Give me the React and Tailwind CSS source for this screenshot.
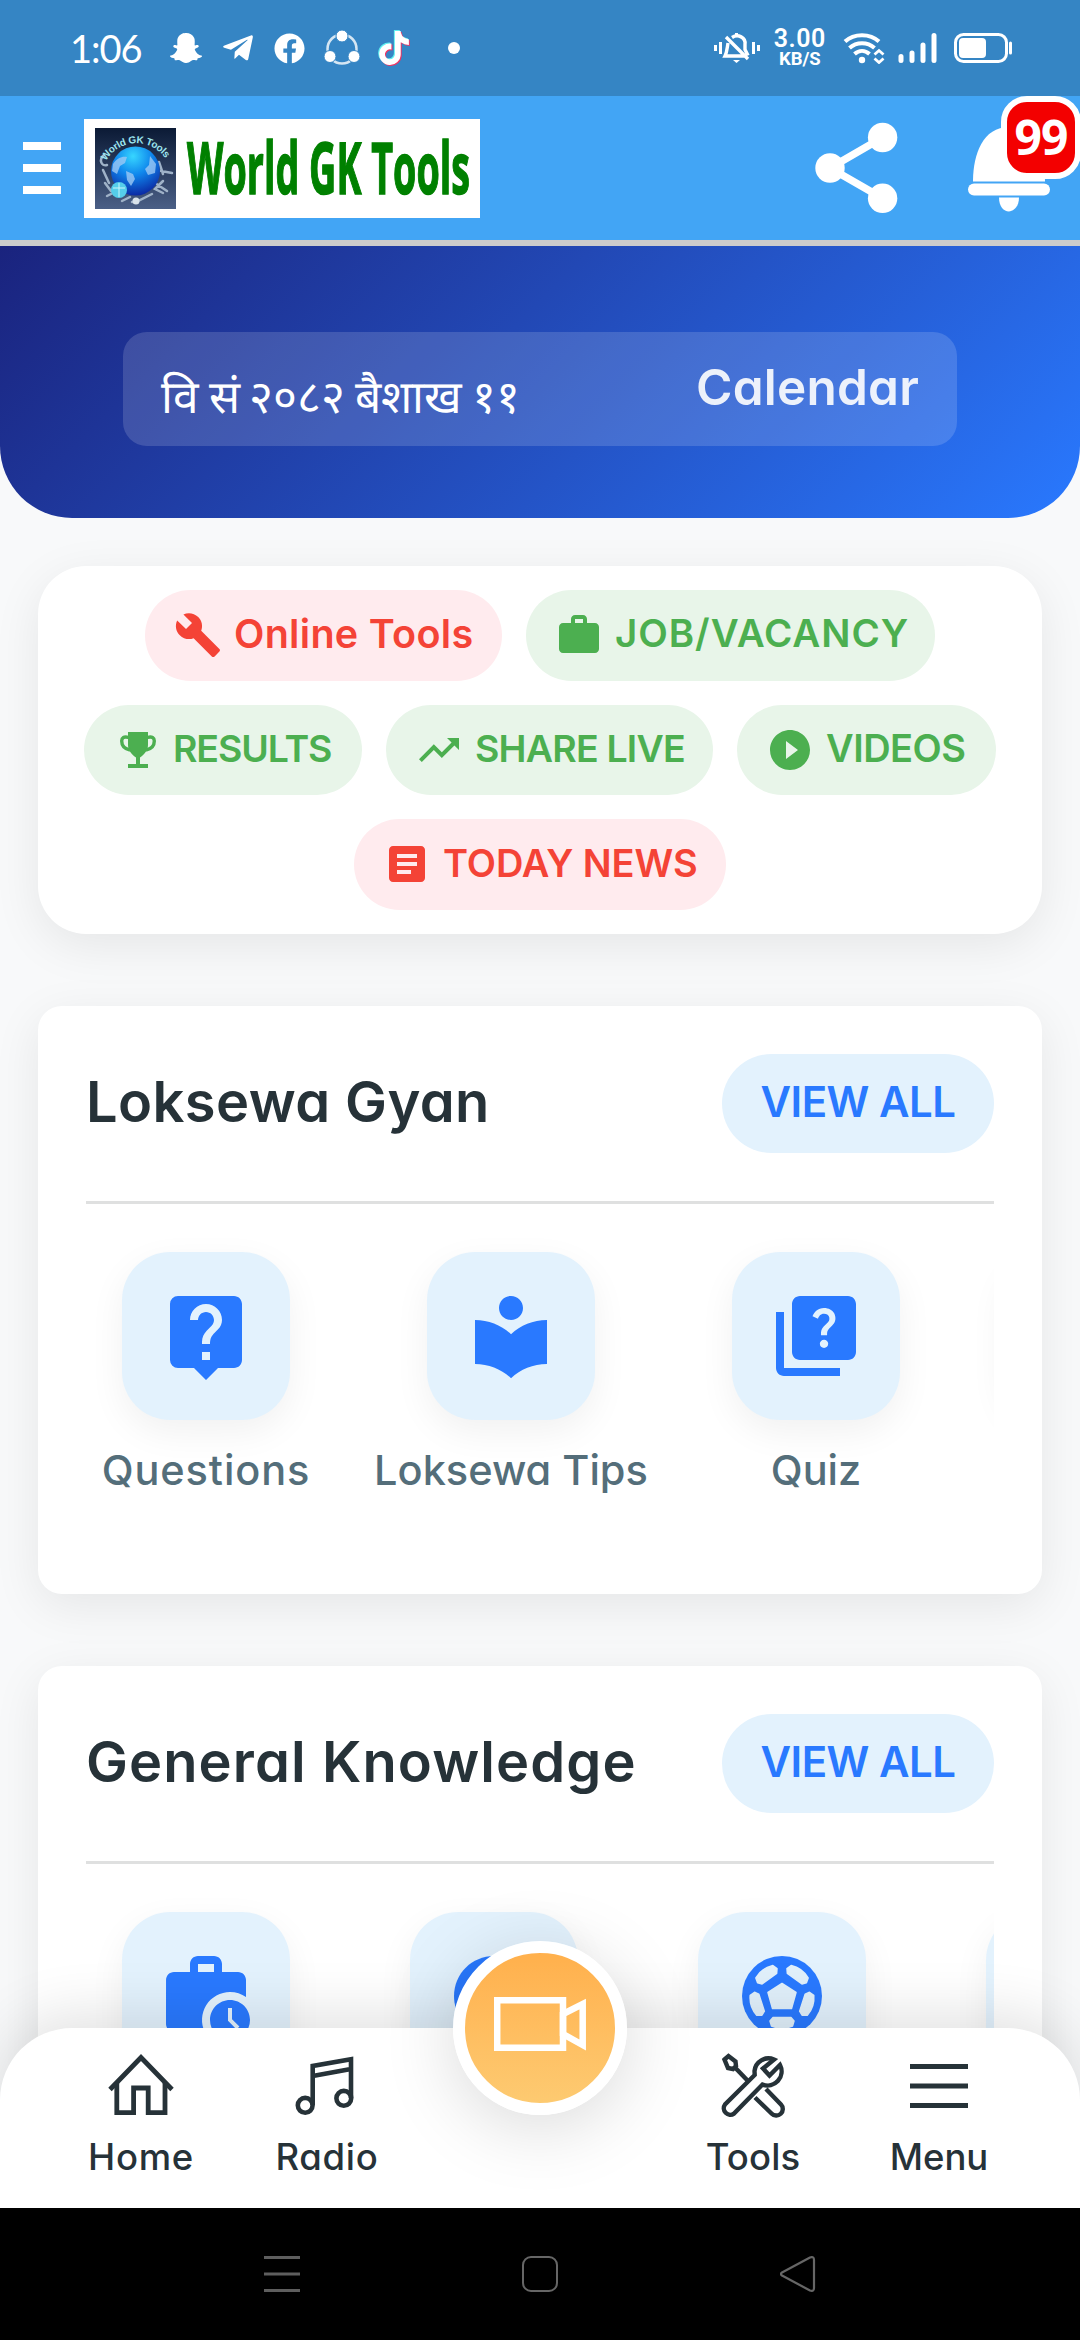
import React from 'react';
import {
  MdBuild,
  MdWork,
  MdTrendingUp,
  MdPlayCircleFilled,
  MdArticle,
  MdLiveHelp,
  MdLocalLibrary,
  MdQuiz,
  MdWorkHistory,
  MdCircle,
} from 'react-icons/md';
import { FaSnapchatGhost, FaTelegramPlane, FaTiktok, FaFacebook } from 'react-icons/fa';

function TrophyIcon({ className }) {
  return (
    <svg className={className} viewBox="0 0 48 48" fill="none">
      <path d="M15 6h20v13c0 5-3 9-8 12.500V38h8v4H15v-4h8v-6.500c-5-3.500-8-7.500-8-12.500z" fill="currentColor" />
      <path d="M15.500 11.500C11 10 8.700 12 8.700 15c0 5 3.300 8 8.300 9M34.500 11.500c4.500-1.500 6.800.5 6.800 3.500 0 5-3.300 8-8.300 9" stroke="currentColor" strokeWidth="3.400" />
    </svg>
  );
}

function FootballIcon({ className }) {
  return (
    <svg className={className} viewBox="0 0 96 96">
      <circle cx="48" cy="48" r="40" fill="currentColor" />
      <g fill="#e1f0fb" stroke="#e1f0fb" strokeWidth="1.500" strokeLinejoin="round">
        <path d="M48 35.500l14 9-4.500 16h-19L34 44.500z" />
        {[0, 72, 144, 216, 288].map((deg) => (
          <path key={deg} transform={`rotate(${deg} 48 48)`} d="M39 69.500h18l3 3.500-1.500 5q-10.500 4.500-21 0L36 73z" />
        ))}
      </g>
    </svg>
  );
}

function HomeIcon() {
  return (
    <svg className="size-[72px]" viewBox="0 0 72 72" fill="none" stroke="currentColor" strokeWidth="4.800">
      <path d="M5 40.500L36 8.500l31 32" />
      <path d="M11.800 34v29.600h16.800V39h14.600v24.600H60V34" />
    </svg>
  );
}

function RadioIcon() {
  return (
    <svg className="size-[72px]" viewBox="0 0 72 72" fill="none" stroke="currentColor" strokeWidth="4.600">
      <circle cx="14.200" cy="56.300" r="7.400" />
      <circle cx="52.800" cy="49.300" r="7.400" />
      <path d="M21.700 56V17l38.300-6.800V49M21.700 27L60 20" />
    </svg>
  );
}

function ToolsIcon() {
  return (
    <svg className="size-[72px]" viewBox="0 0 72 72" fill="none" stroke="currentColor" strokeWidth="4.400">
      <path d="M7.500 10.500l4-3.500 7 5.500.5 4.500-3 3-5-1z" />
      <path d="M18 18.500l13 13.500" />
      <path d="M57 10.500A14 14 0 0 0 37.500 22l.2 4L8 55.500A6.500 6.500 0 0 0 17 64.600l28.500-29.100A14 14 0 0 0 63 16L52.500 26.500l-6.500-7z" />
      <path d="M38 48.500l16.500 16A6.500 6.500 0 0 0 64 55.500L49 40" />
    </svg>
  );
}

function MenuIcon() {
  return (
    <svg className="size-[72px]" viewBox="0 0 72 72" stroke="currentColor" strokeWidth="5">
      <path d="M7 17.600h58M7 37h58M7 56.500h58" />
    </svg>
  );
}

function VideoIcon() {
  return (
    <svg className="h-[54px] w-[92px]" viewBox="0 0 92 54" fill="none" stroke="currentColor" strokeWidth="6.500">
      <path d="M3.200 3.200H69v47.500H3.200z" />
      <path d="M69 17L88.700 7v41L69 37z" />
    </svg>
  );
}

// globe on a dark tile with the name bent round it
function GlobeLogo() {
  return (
    <svg className="h-[81px] w-[81px]" viewBox="0 0 81 81">
      <defs>
        <linearGradient id="tile" x1="0" y1="0" x2="0" y2="1">
          <stop offset="0" stopColor="#0b1a35" />
          <stop offset="1" stopColor="#4a5f86" />
        </linearGradient>
        <radialGradient id="globe" cx="0.45" cy="0.2" r="0.85">
          <stop offset="0" stopColor="#37d6ff" />
          <stop offset="0.45" stopColor="#0f86ec" />
          <stop offset="1" stopColor="#0a1f9c" />
        </radialGradient>
        <path id="arc" d="M11 33A35 35 0 0 1 72 33" />
      </defs>
      <rect width="81" height="81" fill="url(#tile)" />
      <path d="M9 27c-6 5-2 12 3 10M8 42l6 13M10 55l6 8M12 68l8-4M27 73l8-4M37 74l6-1 14-7M64 34l4 12M66 43l11 2M60 55l12 8M68 53l-8 8 8 4" stroke="#9fb2c8" strokeWidth="2.500" fill="none" strokeLinecap="round" />
      <circle cx="41" cy="73" r="3.500" fill="#d8e2ea" />
      <circle cx="40.500" cy="43" r="24.500" fill="url(#globe)" />
      <path d="M18 36c4-6 9-8 14-7l-2 6-5 3-3 8-5-3zM31 43l7 3 2 5-4 7-4-6zM55 28l6 8-1 9-7 2-3-6 4-4z" fill="#9cc8f4" opacity="0.8" />
      <circle cx="24" cy="62" r="8" fill="#55cdea" />
      <path d="M18 60h12M24 55v14" stroke="#c9f4fb" strokeWidth="1" />
      <text fontFamily="Liberation Sans, sans-serif" fontSize="10" fontWeight="700" letterSpacing="-0.300" fill="#9de4ee">
        <textPath href="#arc">World GK Tools</textPath>
      </text>
    </svg>
  );
}

function ShareIcon() {
  return (
    <svg className="h-[92px] w-[84px]" viewBox="0 0 84 92" fill="white">
      <path d="M67.600 15.500L15 46l52.600 30.300" stroke="white" strokeWidth="7.500" fill="none" />
      <circle cx="67.600" cy="15.500" r="14.700" />
      <circle cx="15" cy="46" r="14.700" />
      <circle cx="67.600" cy="76.300" r="14.700" />
    </svg>
  );
}

function BellIcon() {
  return (
    <svg className="h-[88px] w-[82px]" viewBox="0 0 82 88" fill="white">
      <path d="M5 57.500C5 30 15 3 41 3s36 27 36 54.500z" />
      <rect x="0" y="59.500" width="82" height="12" rx="6" />
      <path d="M31 73.500h20c0 18-20 19-20 0z" />
    </svg>
  );
}

function StatusBar() {
  return (
    <div className="flex h-24 items-center bg-[#3585c4] pl-[70px] pr-[67px] text-white">
      <span className="w-[100px] font-['Lato'] text-[38px] tracking-[-1px]">1:06</span>
      <FaSnapchatGhost className="size-8" />
      <FaTelegramPlane className="ml-[19px] size-[34px]" />
      <FaFacebook className="ml-[19px] size-[31px]" />
      <svg className="ml-[19px] size-9" viewBox="0 0 36 36" fill="none">
        <circle cx="18" cy="19" r="14.500" stroke="#d5e6f3" strokeWidth="2.500" />
        <g fill="white" stroke="#3585c4" strokeWidth="1">
          <circle cx="18" cy="6" r="6" />
          <circle cx="6" cy="26.500" r="6" />
          <circle cx="30" cy="26.500" r="6" />
        </g>
      </svg>
      <div className="relative ml-[16px] size-9">
        <FaTiktok className="absolute left-0 top-0 size-[34px] text-[#5ff0f0]" />
        <FaTiktok className="absolute left-[2px] top-[2px] size-[34px] text-[#ee3565]" />
        <FaTiktok className="absolute left-px top-px size-[34px]" />
      </div>
      <span className="ml-[36px] size-3 rounded-full bg-white" />

      <div className="ml-auto flex items-center">
        <svg className="h-8 w-[46px]" viewBox="0 0 46 32" fill="none" stroke="white" strokeWidth="3">
          <path d="M1.500 13v6M6.500 10v12M39.500 10v12M44.500 13v6" />
          <path d="M18 5.500c6-4 14 0 13 7v5l3 6M14 11c-1 6-1 9-3 13h21M12 5l22 22" strokeWidth="3.400" />
          <path d="M22.500 1v3" />
          <path d="M19 28h7l-3.500 3z" fill="white" stroke="none" />
        </svg>
        <div className="ml-3.5 flex flex-col items-center font-['Roboto'] leading-none">
          <span className="text-[25px] font-semibold leading-[19px] tracking-[0.6px]">3.00</span>
          <span className="mt-[3px] text-[18.5px] font-bold leading-[16px]">KB/S</span>
        </div>
        <svg className="ml-[17px] h-8 w-[42px]" viewBox="0 0 42 32" fill="none" stroke="white" strokeWidth="4">
          <path d="M2 9.500C11 1 27 1 36 9.500M6.500 16c7-6.500 18-6.500 25 0M11.500 22c4.500-4 10.500-4 15 0" />
          <circle cx="19" cy="28" r="3.200" fill="white" stroke="none" />
          <path d="M31.500 22.500l4.500-4 4.500 4M31.500 26.500l4.500 4 4.500-4" strokeWidth="2.800" />
        </svg>
        <svg className="ml-[13px] h-8 w-[40px]" viewBox="0 0 40 32" stroke="white" strokeWidth="5" strokeLinecap="round">
          <path d="M3 24.500v4M14 21v7.500M25 13v15.500M36 3.500v25" />
        </svg>
        <svg className="ml-[16px] h-8 w-[59px]" viewBox="0 0 59 32" fill="none">
          <rect x="1.500" y="2.500" width="51" height="27" rx="8" stroke="white" strokeWidth="3" />
          <rect x="5" y="6" width="27" height="20" rx="4" fill="white" />
          <path d="M56.500 11v10" stroke="white" strokeWidth="3" strokeLinecap="round" />
        </svg>
      </div>
    </div>
  );
}

function Header() {
  return (
    <header className="flex h-[150px] items-center border-b-[6px] border-[#cccccc] bg-[#42a5f5] pl-[23px] pr-[30px]">
      <div className="flex flex-col gap-3.5">
        <span className="h-2 w-[38px] bg-white" />
        <span className="h-2 w-[38px] bg-white" />
        <span className="h-2 w-[38px] bg-white" />
      </div>
      <div className="ml-[23px] flex h-[99px] w-[396px] items-center bg-white pl-[11px]">
        <GlobeLogo />
        <svg className="ml-[10px] h-[99px] w-[290px] overflow-visible" viewBox="0 0 290 99">
          <text x="1" y="75" textLength="283" lengthAdjust="spacingAndGlyphs" fontFamily="Open Sans, sans-serif" fontSize="72" fontWeight="700" fill="#008000" stroke="#008000" strokeWidth="1.500">
            World GK Tools
          </text>
        </svg>
      </div>
      <div className="ml-auto flex items-center">
        <ShareIcon />
        <div className="relative ml-[69px]">
          <BellIcon />
          <span className="absolute -top-[28px] left-[33px] flex h-[83px] w-20 items-center justify-center rounded-[26px] border-[6px] border-white bg-[#f30000] pb-[2px] font-['Noto_Sans'] text-[48px] font-bold tracking-[-1px] text-white">
            99
          </span>
        </div>
      </div>
    </header>
  );
}

const chips = [
  { label: 'Online Tools', icon: MdBuild, box: 'w-[357px] bg-[#ffebee] text-[#f44336]', text: 'text-[39.5px] tracking-[0.3px]' },
  { label: 'JOB/VACANCY', icon: MdWork, box: 'w-[409px] bg-[#e8f5e9] text-[#4caf50]', text: 'text-[38.5px] tracking-[0.9px]' },
  { label: 'RESULTS', icon: TrophyIcon, box: 'w-[278px] bg-[#e8f5e9] text-[#4caf50]', text: 'text-[37.5px] tracking-[-1.1px]' },
  { label: 'SHARE LIVE', icon: MdTrendingUp, box: 'w-[327px] bg-[#e8f5e9] text-[#4caf50]', text: 'text-[37.5px] tracking-[-0.8px]' },
  { label: 'VIDEOS', icon: MdPlayCircleFilled, box: 'w-[259px] bg-[#e8f5e9] text-[#4caf50]', text: 'text-[38px] tracking-[-0.5px]' },
  { label: 'TODAY NEWS', icon: MdArticle, box: 'w-[372px] bg-[#ffebee] text-[#f44336]', text: 'text-[38px] tracking-[-0.1px]' },
];

function Chip({ chip }) {
  const Icon = chip.icon;
  return (
    <button className={`flex h-[90.5px] items-center gap-3 rounded-full pl-[29px] ${chip.box}`}>
      <Icon className="size-12 shrink-0" />
      <span className={`whitespace-nowrap pb-[2px] font-semibold ${chip.text}`}>{chip.label}</span>
    </button>
  );
}

const sections = [
  {
    title: 'Loksewa Gyan',
    tracking: 'tracking-[0.4px]',
    list: 'gap-[19px]',
    items: [
      { label: 'Questions', icon: MdLiveHelp, width: 'w-[240px] tracking-[0.9px]' },
      { label: 'Loksewa Tips', icon: MdLocalLibrary, width: 'w-[332px]' },
      { label: 'Quiz', icon: MdQuiz, width: 'w-[240px]' },
      { label: '', icon: MdCircle, width: 'w-[264px]' },
    ],
  },
  {
    title: 'General Knowledge',
    tracking: 'tracking-[1.1px]',
    list: 'gap-12',
    items: [
      { label: '', icon: MdWorkHistory, width: 'w-[240px]' },
      { label: '', icon: MdCircle, width: 'w-[240px]' },
      { label: '', icon: FootballIcon, width: 'w-[240px]' },
      { label: '', icon: MdCircle, width: 'w-[240px]' },
    ],
  },
];

function Section({ section }) {
  return (
    <section className="h-[588px] rounded-3xl bg-white p-12 shadow-[0_12px_48px_rgba(0,0,0,0.08)]">
      <div className="flex items-center justify-between border-b-[3px] border-[#dfe0e0] pb-12">
        <h2 className={`pb-[3px] text-[56px] font-semibold text-[#263238] ${section.tracking}`}>{section.title}</h2>
        <button className="flex h-[99px] w-[272px] items-center justify-center rounded-full bg-[#e3f2fd] pb-[5px] text-[42px] font-semibold tracking-[-0.5px] text-[#2979ff]">
          VIEW ALL
        </button>
      </div>
      <div className={`flex overflow-hidden pb-16 pt-12 ${section.list}`}>
        {section.items.map((item, i) => {
          const Icon = item.icon;
          return (
            <div key={i} className={`flex shrink-0 flex-col items-center ${item.width}`}>
              <div className="flex size-[168px] items-center justify-center rounded-[48px] bg-[#e3f2fd] text-[#2979ff] shadow-[0_12px_36px_rgba(0,0,0,0.06)]">
                <Icon className="size-24" />
              </div>
              <span className="mt-[19px] whitespace-nowrap text-[41.5px] font-medium text-[#546e7a]">{item.label}</span>
            </div>
          );
        })}
      </div>
    </section>
  );
}

function NavItem({ icon: Icon, label, tracking }) {
  return (
    <div className="flex w-[186px] flex-col items-center pt-[21px]">
      <Icon />
      <span className={`mt-[10px] text-[36.5px] font-medium leading-[52px] ${tracking}`}>{label}</span>
    </div>
  );
}

function BottomNav() {
  return (
    <nav className="relative flex h-[180px] justify-between rounded-t-[72px] bg-white px-12 text-[#263238] shadow-[0_-12px_60px_rgba(0,0,0,0.12)]">
      <div className="flex">
        <NavItem icon={HomeIcon} label="Home" tracking="tracking-[0.7px]" />
        <NavItem icon={RadioIcon} label="Radio" tracking="tracking-[0.7px]" />
      </div>
      <button className="absolute -top-[87px] left-[453px] flex size-[174px] items-center justify-center rounded-full border-[12px] border-white bg-linear-to-b from-[#ffb04c] to-[#fdca71] pb-[9px] text-white shadow-[0_12px_72px_rgba(0,0,0,0.15)]">
        <VideoIcon />
      </button>
      <div className="flex">
        <NavItem icon={ToolsIcon} label="Tools" tracking="tracking-[0.1px]" />
        <NavItem icon={MenuIcon} label="Menu" tracking="tracking-[0px]" />
      </div>
    </nav>
  );
}

function SystemNav() {
  return (
    <div className="flex h-[132px] items-center justify-between bg-black px-[264px]">
      <svg className="size-9" viewBox="0 0 36 36" stroke="#5e5e5e" strokeWidth="3">
        <path d="M0 1.500h36M0 18h36M0 34.500h36" />
      </svg>
      <svg className="size-9" viewBox="0 0 36 36" fill="none" stroke="#666666" strokeWidth="2">
        <rect x="1" y="1" width="34" height="34" rx="8" />
      </svg>
      <svg className="size-9" viewBox="0 0 36 36" fill="none" stroke="#666666" strokeWidth="2.200" strokeLinejoin="round">
        <path d="M2 16.500L30 1.500q4-1.500 4 2.500v28q0 4-4 2.500L2 19.500q-2-1.500 0-3z" />
      </svg>
    </div>
  );
}

export default function App() {
  return (
    <div className="flex h-[2340px] w-[1080px] flex-col overflow-hidden bg-[#f8f9fa] font-['Inter',sans-serif] [font-feature-settings:'cv11']">
      <StatusBar />
      <Header />
      <main className="min-h-0 flex-1">
        <div className="rounded-b-[72px] bg-linear-135 from-[#1a237e] to-[#2979ff] px-[123px] pb-[72px] pt-[86px]">
          <div className="flex h-[114px] items-center justify-between rounded-3xl bg-white/15 px-[38px] text-white">
            <span className="pt-3.5 text-[46px] [word-spacing:-3.3px]">वि सं २०८२ बैशाख ११</span>
            <span className="pb-[3px] text-[49.5px] font-semibold tracking-[0.2px] opacity-90">Calendar</span>
          </div>
        </div>

        <div className="mx-[38px] mt-12 flex h-[368px] flex-wrap content-start justify-center gap-6 rounded-[48px] bg-white pt-6 shadow-[0_12px_48px_rgba(0,0,0,0.08)]">
          {chips.map((chip) => (
            <Chip key={chip.label} chip={chip} />
          ))}
        </div>

        <div className="mx-[38px] mt-[72px] flex flex-col gap-[72px]">
          {sections.map((section) => (
            <Section key={section.title} section={section} />
          ))}
        </div>
      </main>
      <BottomNav />
      <SystemNav />
    </div>
  );
}
